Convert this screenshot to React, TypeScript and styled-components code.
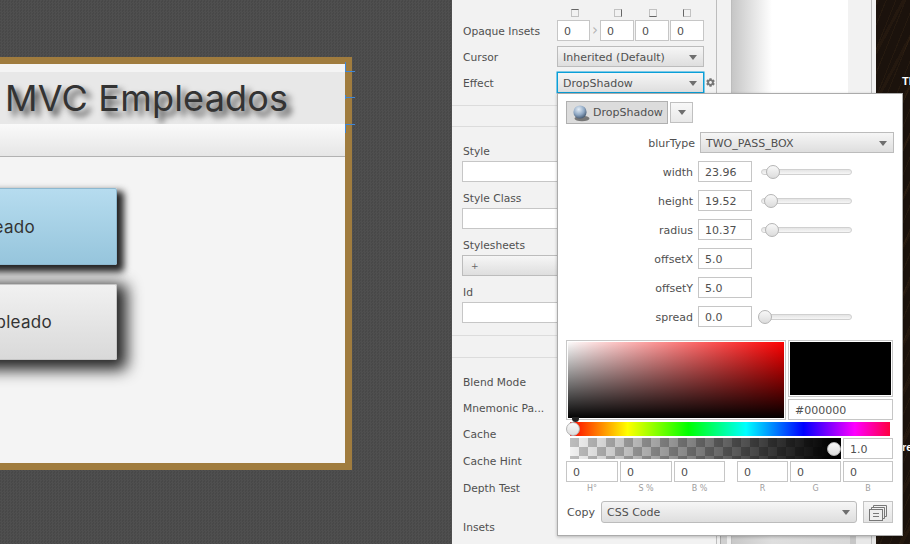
import React from 'react';
import styled, { createGlobalStyle } from 'styled-components';
import { FaCog } from 'react-icons/fa';

const GlobalStyle = createGlobalStyle`
  html, body {
    margin: 0;
    padding: 0;
    width: 910px;
    height: 544px;
    overflow: hidden;
    background: #4b4b4b;
  }
  * {
    box-sizing: border-box;
  }
`;

const uiFont = `"DejaVu Sans", "Liberation Sans", sans-serif`;

const Screen = styled.div`
  position: relative;
  display: flex;
  width: 910px;
  height: 544px;
  overflow: hidden;
  font-family: ${uiFont};
  font-size: 10.7px;
  color: #505050;
`;

/* left: scene builder canvas */
const Canvas = styled.div`
  width: 452px;
  height: 544px;
  flex: none;
  padding-top: 57px;
  background: repeating-conic-gradient(#4f4f4f 0 25%, #484848 0 50%) 0 0 / 3px 3px;
`;

const Frame = styled.div`
  position: relative;
  width: 502px;
  height: 413px;
  margin-left: -150px;
  border: 7px solid #a07c3e;
  background: #f4f4f4;
  padding-top: 8px;
  display: flex;
  flex-direction: column;
`;

const Guide = styled.span<{ $top: number; $up?: boolean; $down?: boolean }>`
  position: absolute;
  right: -10px;
  top: ${(p) => p.$top}px;
  width: 10px;
  height: 1px;
  background: #3d86d8;

  &::before {
    content: '';
    position: absolute;
    left: 0;
    width: 1px;
    height: ${(p) => (p.$up || p.$down ? 9 : 4)}px;
    top: ${(p) => (p.$up ? -9 : p.$down ? 0 : -2)}px;
    background: #3d86d8;
  }
`;

const TitleBar = styled.div`
  height: 52px;
  flex: none;
  background: #e8e8e8;
  padding-left: 148px;
  padding-bottom: 1px;
  display: flex;
  align-items: center;
  white-space: nowrap;
  font-family: Inter, "Liberation Sans", sans-serif;
  font-size: 36px;
  letter-spacing: 0.2px;
  color: #333;
  text-shadow: 5px 5px 6px rgba(0, 0, 0, 0.75);
`;

const ToolStrip = styled.div`
  height: 33px;
  flex: none;
  background: linear-gradient(#fafafa, #e6e6e6);
  border-bottom: 1px solid #b2b2b2;
`;

const FrameBody = styled.div`
  flex: 1;
  padding: 31px 0 0 60px;
  display: flex;
  flex-direction: column;
  gap: 19px;
`;

const BigButton = styled.div<{ $blue?: boolean; $tall?: boolean; $shadow: string; $inset: number }>`
  width: 200px;
  height: ${(p) => (p.$tall ? 77 : 76)}px;
  border-radius: 2px;
  border: 1px solid ${(p) => (p.$blue ? '#8db8cf' : '#c6c6c6')};
  background: ${(p) =>
    p.$blue ? 'linear-gradient(#b6dcef, #96c5dc)' : 'linear-gradient(#f1f1f1, #d9d9d9)'};
  box-shadow: ${(p) => p.$shadow};
  display: flex;
  align-items: center;
  justify-content: flex-end;
  padding-right: ${(p) => p.$inset}px;
  font-family: Inter, "Liberation Sans", sans-serif;
  font-size: 17px;
  letter-spacing: 0.3px;
  color: #333;
  white-space: nowrap;
`;

/* inspector */
const Inspector = styled.div`
  width: 264px;
  flex: none;
  height: 544px;
  background: #f2f2f2;
  padding-top: 7px;
  display: flex;
  flex-direction: column;
`;

const SideIcons = styled.div`
  height: 11px;
  margin: 0 0 2px 105px;
  padding: 2px 0 0 14px;
  display: flex;
`;

const SideIcon = styled.span<{ $side: string; $gap: number }>`
  width: 8px;
  height: 8px;
  margin-right: ${(p) => p.$gap}px;
  border: 1px solid #c2c2c2;
  border-${(p) => p.$side}-color: #666;
`;

const RowGroup = styled.div`
  display: flex;
  flex-direction: column;
  gap: 5px;
  padding: 0 12px 0 11px;
`;

const Row = styled.div`
  display: grid;
  grid-template-columns: 94px 147px;
  align-items: center;
  height: 21px;
  position: relative;
`;

const RowLabel = styled.span`
  margin-top: 2px;
`;

const InsetCells = styled.div`
  display: flex;
  align-items: center;
`;

const Chevron = styled.span`
  width: 10px;
  text-align: center;
  color: #b4b4b4;
  font-size: 15px;
  line-height: 19px;
`;

const Field = styled.div<{ $w?: number; $mr?: number }>`
  width: ${(p) => (p.$w ? `${p.$w}px` : '100%')};
  height: 21px;
  flex: none;
  margin-right: ${(p) => p.$mr ?? 0}px;
  background: #fff;
  border: 1px solid #c6c6c6;
  padding: 0 6px;
  line-height: 21px;
  font-size: 11px;
  color: #505050;
  white-space: nowrap;
`;

const Select = styled.div<{ $focus?: boolean; $round?: boolean; $w?: number }>`
  width: ${(p) => (p.$w ? `${p.$w}px` : '100%')};
  height: ${(p) => (p.$round ? 22 : 21)}px;
  flex: none;
  display: flex;
  align-items: center;
  justify-content: space-between;
  padding: 1px 6px 0 5px;
  border: 1px solid ${(p) => (p.$focus ? '#0a9fd8' : '#bcbcbc')};
  box-shadow: ${(p) => (p.$focus ? '0 0 0 0.5px #0a9fd8' : 'none')};
  border-radius: ${(p) => (p.$round ? 3 : 0)}px;
  background: linear-gradient(#f6f6f6, #dedede);
  font-size: 11px;
  color: #505050;
`;

const Plus = styled.span`
  padding-left: 3px;
  font-size: 9px;
  color: #666;
`;

const Caret = styled.span`
  width: 0;
  height: 0;
  border-left: 4px solid transparent;
  border-right: 4px solid transparent;
  border-top: 5px solid #6e6e6e;
`;

const GearSlot = styled.span`
  position: absolute;
  left: 243px;
  top: 6px;
  color: #777;
  display: flex;
`;

const Divider = styled.div<{ $top: number }>`
  height: 1px;
  flex: none;
  margin-top: ${(p) => p.$top}px;
  background: #dcdcdc;
`;

const Stack = styled.div<{ $top: number }>`
  margin-top: ${(p) => p.$top}px;
  padding-left: 10px;
  display: flex;
  flex-direction: column;
  gap: 3px;
`;

const StackLabel = styled.div`
  height: 14px;
  line-height: 14px;
  padding: 1px 0 0 1px;
`;

const PlainLabel = styled.div<{ $top: number }>`
  margin-top: ${(p) => p.$top}px;
  padding: 1px 0 0 11px;
  height: 14px;
  line-height: 14px;
`;

/* middle and right of the window */
const Strip = styled.div`
  width: 16px;
  flex: none;
  height: 544px;
  background: #f2f2f2;
  border-left: 1px solid #bdbdbd;
  border-right: 1px solid #bdbdbd;
  padding-top: 536px;
`;

const StripFooter = styled.div`
  height: 8px;
  background: linear-gradient(
    to right,
    #f0f0f0 0 3px,
    #a8a8a8 3px 4px,
    #cfcfcf 4px 10px,
    #eeeeee 10px
  );
`;

const Center = styled.div`
  width: 116px;
  flex: none;
  height: 544px;
  padding-top: 536px;
  background: linear-gradient(to right, #c6c6c6, #fff 40px);
`;

const CenterFooter = styled.div`
  height: 8px;
  background: linear-gradient(to right, #c8c8c8, #dedede 40px, #d8d8d8);
`;

const SidePane = styled.div`
  width: 28px;
  flex: none;
  height: 544px;
  padding-top: 536px;
  background: #f2f2f2;
  position: relative;
`;

const SidePaneFooter = styled.div`
  height: 8px;
  background: linear-gradient(to right, #d8d8d8 0 2px, #c6c6c6 2px 8px, #e8e8e8 8px);
`;

const SidePaneLine = styled.div`
  position: absolute;
  left: 23px;
  top: 0;
  width: 1px;
  height: 544px;
  background: #bdbdbd;
`;

const Wood = styled.div`
  flex: 1;
  height: 544px;
  padding: 75px 0 0 26px;
  overflow: hidden;
  background:
    repeating-linear-gradient(112deg, rgba(125, 88, 40, 0.1) 0 1px, transparent 1px 9px),
    repeating-linear-gradient(118deg, rgba(90, 60, 30, 0.14) 0 3px, transparent 3px 23px),
    #1b120c;
  color: #fff;
  font-family: "Liberation Sans", sans-serif;
  font-size: 11px;
  font-weight: 700;
  line-height: 13px;
  white-space: nowrap;
`;

const WoodLine = styled.div<{ $top?: number }>`
  margin-top: ${(p) => p.$top ?? 0}px;
`;

/* effect popup */
const Popup = styled.div`
  position: absolute;
  left: 557px;
  top: 93px;
  width: 346px;
  height: 443px;
  background: #fff;
  border: 1px solid #ababab;
  box-shadow: 0 1px 3px rgba(0, 0, 0, 0.25);
  padding: 7px 8px 0;
  display: flex;
  flex-direction: column;
`;

const PopupHeader = styled.div`
  display: flex;
  align-items: center;
  gap: 2px;
  height: 23px;
`;

const Toggle = styled.div`
  width: 102px;
  height: 23px;
  display: flex;
  align-items: center;
  gap: 3px;
  padding-left: 5px;
  background: #dcdcdc;
  border: 1px solid #b0b0b0;
  font-size: 11px;
  color: #505050;
`;

const MenuButton = styled.div`
  width: 23px;
  height: 21px;
  display: flex;
  align-items: center;
  justify-content: center;
  border: 1px solid #c0c0c0;
  background: linear-gradient(#f8f8f8, #e8e8e8);
`;

const PropRow = styled.div<{ $top: number }>`
  margin-top: ${(p) => p.$top}px;
  height: 21px;
  display: flex;
  align-items: center;
`;

const PropLabel = styled.div<{ $w: number }>`
  width: ${(p) => p.$w}px;
  flex: none;
  text-align: right;
  padding: 2px 5px 0 0;
  font-size: 11px;
`;

const Slider = styled.div`
  position: relative;
  width: 91px;
  height: 6px;
  margin-left: 9px;
  border-radius: 3px;
  border: 1px solid #d0d0d0;
  background: linear-gradient(#e4e4e4, #f6f6f6);
`;

const Thumb = styled.span<{ $at: number; $size?: number }>`
  position: absolute;
  left: ${(p) => p.$at}px;
  top: 50%;
  width: ${(p) => p.$size ?? 14}px;
  height: ${(p) => p.$size ?? 14}px;
  transform: translate(-50%, -50%);
  border-radius: 50%;
  border: 1px solid #b4b4b4;
  background: linear-gradient(#f8f8f8, #dcdcdc);
`;

const PickerTop = styled.div`
  margin-top: 13px;
  display: grid;
  grid-template-columns: 220px 105px;
  column-gap: 2px;
  height: 80px;
`;

const SatBox = styled.div`
  position: relative;
  border: 1px solid #c8c8c8;
  outline: 1px solid #fff;
  outline-offset: -2px;
  background:
    linear-gradient(to top, #000, transparent),
    linear-gradient(to right, #fff, #ff0000);
`;

const SatMarker = styled.span`
  position: absolute;
  left: 5px;
  bottom: -3px;
  width: 7px;
  height: 5px;
  border-radius: 0 0 4px 4px;
  background: #222;
`;

const PreviewColumn = styled.div`
  display: flex;
  flex-direction: column;
  gap: 2px;
`;

const Preview = styled.div`
  height: 57px;
  border: 1px solid #c8c8c8;
  outline: 1px solid #fff;
  outline-offset: -2px;
  background: #000;
`;

const HueBar = styled.div`
  position: relative;
  margin: 2px 4px 0 4px;
  width: 320px;
  height: 14px;
  background: linear-gradient(
    to right,
    #ff0000,
    #ffff00 18%,
    #00ff00 37%,
    #00ffff 55%,
    #0000ff 73%,
    #ff00ff 89%,
    #ff0040
  );
`;

const AlphaRow = styled.div`
  display: flex;
  margin-top: 2px;
  height: 21px;
  padding-left: 4px;
  gap: 2px;
`;

const AlphaBar = styled.div`
  position: relative;
  width: 271px;
  height: 21px;
  background:
    linear-gradient(to right, transparent, #000 97%),
    repeating-conic-gradient(#bdbdbd 0 25%, #f2f2f2 0 50%) 9px 0 / 18px 18px;
`;

const ValueGrid = styled.div`
  margin-top: 2px;
  display: grid;
  grid-template-columns: 52px 52px 51px 61px 51px 50px;
  column-gap: 2px;
`;

const ValueCell = styled.div<{ $gap?: boolean }>`
  display: flex;
  flex-direction: column;
  align-items: center;
  padding-left: ${(p) => (p.$gap ? 10 : 0)}px;
`;

const ValueCaption = styled.div`
  margin-top: 1px;
  font-size: 8px;
  line-height: 11px;
  color: #a0a0a0;
`;

const CopyRow = styled.div`
  margin-top: 7px;
  height: 22px;
  display: flex;
  align-items: center;
`;

const CopyLabel = styled.div`
  width: 35px;
  padding: 1px 0 0 1px;
  font-size: 11px;
`;

const CopyButton = styled.div`
  margin-left: 6px;
  width: 30px;
  height: 22px;
  display: flex;
  align-items: center;
  justify-content: center;
  border: 1px solid #c4c4c4;
  background: linear-gradient(#f6f6f6, #e4e4e4);
`;

const Sphere = () => (
  <svg width="18" height="18" viewBox="0 0 18 18">
    <defs>
      <radialGradient id="ball" cx="40%" cy="30%" r="70%">
        <stop offset="0%" stopColor="#e4edf6" />
        <stop offset="60%" stopColor="#8fa8c4" />
        <stop offset="100%" stopColor="#4a5e76" />
      </radialGradient>
    </defs>
    <ellipse cx="10" cy="14.5" rx="7.5" ry="2.8" fill="#777" />
    <circle cx="8" cy="8" r="6.6" fill="url(#ball)" />
  </svg>
);

const CopyIcon = () => (
  <svg width="19" height="17" viewBox="0 0 19 17" fill="none" stroke="#777" strokeWidth="1">
    <path d="M4.5 3.5V1.5H17.5V12.5H15.5" />
    <path d="M2.5 5.5V3.5H15.5V14.5H13.5" />
    <rect x="0.5" y="5.5" width="13" height="11" fill="#eee" />
    <path d="M4 9.5H10M4 12.5H10" />
  </svg>
);

const sliders = [
  { label: 'width', value: '23.96', at: 11 },
  { label: 'height', value: '19.52', at: 9 },
  { label: 'radius', value: '10.37', at: 10 },
];

const values = [
  { value: '0', caption: 'H°' },
  { value: '0', caption: 'S %' },
  { value: '0', caption: 'B %' },
  { value: '0', caption: 'R' },
  { value: '0', caption: 'G' },
  { value: '0', caption: 'B' },
];

export default function App() {
  return (
    <Screen>
      <GlobalStyle />
      <Canvas>
        <Frame>
          <Guide $top={7} $up />
          <Guide $top={33} />
          <Guide $top={60} $down />
          <TitleBar>MVC Empleados</TitleBar>
          <ToolStrip />
          <FrameBody>
            <BigButton $blue $tall $shadow="5px 5px 7px 2px rgba(0, 0, 0, 0.85)" $inset={81}>
              Nuevo Empleado
            </BigButton>
            <BigButton $shadow="5px 5px 15px 5px rgba(0, 0, 0, 0.85)" $inset={64}>
              Ver Empleado
            </BigButton>
          </FrameBody>
        </Frame>
      </Canvas>

      <Inspector>
        <SideIcons>
          <SideIcon $side="top" $gap={35} />
          <SideIcon $side="right" $gap={27} />
          <SideIcon $side="bottom" $gap={26} />
          <SideIcon $side="left" $gap={0} />
        </SideIcons>
        <RowGroup>
          <Row>
            <RowLabel>Opaque Insets</RowLabel>
            <InsetCells>
              <Field $w={33}>0</Field>
              <Chevron>›</Chevron>
              <Field $w={34} $mr={1}>0</Field>
              <Field $w={34} $mr={1}>0</Field>
              <Field $w={34}>0</Field>
            </InsetCells>
          </Row>
          <Row>
            <RowLabel>Cursor</RowLabel>
            <Select>
              Inherited (Default)
              <Caret />
            </Select>
          </Row>
          <Row>
            <RowLabel>Effect</RowLabel>
            <Select $focus>
              DropShadow
              <Caret />
            </Select>
            <GearSlot>
              <FaCog size={9} />
            </GearSlot>
          </Row>
        </RowGroup>
        <Divider $top={12} />
        <Divider $top={20} />
        <Stack $top={17}>
          <StackLabel>Style</StackLabel>
          <Field />
        </Stack>
        <Stack $top={9}>
          <StackLabel>Style Class</StackLabel>
          <Field />
        </Stack>
        <Stack $top={9}>
          <StackLabel>Stylesheets</StackLabel>
          <Select>
            <Plus>+</Plus>
          </Select>
        </Stack>
        <Stack $top={9}>
          <StackLabel>Id</StackLabel>
          <Field />
        </Stack>
        <Divider $top={12} />
        <Divider $top={21} />
        <PlainLabel $top={17}>Blend Mode</PlainLabel>
        <PlainLabel $top={12}>Mnemonic Pa...</PlainLabel>
        <PlainLabel $top={12}>Cache</PlainLabel>
        <PlainLabel $top={13}>Cache Hint</PlainLabel>
        <PlainLabel $top={13}>Depth Test</PlainLabel>
        <PlainLabel $top={25}>Insets</PlainLabel>
      </Inspector>

      <Strip>
        <StripFooter />
      </Strip>
      <Center>
        <CenterFooter />
      </Center>
      <SidePane>
        <SidePaneFooter />
        <SidePaneLine />
      </SidePane>
      <Wood>
        <WoodLine>TI</WoodLine>
        <WoodLine $top={353}>re</WoodLine>
      </Wood>

      <Popup>
        <PopupHeader>
          <Toggle>
            <Sphere />
            DropShadow
          </Toggle>
          <MenuButton>
            <Caret />
          </MenuButton>
        </PopupHeader>
        <PropRow $top={8}>
          <PropLabel $w={134}>blurType</PropLabel>
          <Select $w={194}>
            TWO_PASS_BOX
            <Caret />
          </Select>
        </PropRow>
        {sliders.map((s) => (
          <PropRow key={s.label} $top={8}>
            <PropLabel $w={132}>{s.label}</PropLabel>
            <Field $w={54}>{s.value}</Field>
            <Slider>
              <Thumb $at={s.at} />
            </Slider>
          </PropRow>
        ))}
        <PropRow $top={8}>
          <PropLabel $w={132}>offsetX</PropLabel>
          <Field $w={54}>5.0</Field>
        </PropRow>
        <PropRow $top={8}>
          <PropLabel $w={132}>offsetY</PropLabel>
          <Field $w={54}>5.0</Field>
        </PropRow>
        <PropRow $top={8}>
          <PropLabel $w={132}>spread</PropLabel>
          <Field $w={54}>0.0</Field>
          <Slider>
            <Thumb $at={3} />
          </Slider>
        </PropRow>

        <PickerTop>
          <SatBox>
            <SatMarker />
          </SatBox>
          <PreviewColumn>
            <Preview />
            <Field>#000000</Field>
          </PreviewColumn>
        </PickerTop>
        <HueBar>
          <Thumb $at={3} />
        </HueBar>
        <AlphaRow>
          <AlphaBar>
            <Thumb $at={264} />
          </AlphaBar>
          <Field $w={50}>1.0</Field>
        </AlphaRow>
        <ValueGrid>
          {values.map((v, i) => (
            <ValueCell key={v.caption + i} $gap={i === 3}>
              <Field>{v.value}</Field>
              <ValueCaption>{v.caption}</ValueCaption>
            </ValueCell>
          ))}
        </ValueGrid>
        <CopyRow>
          <CopyLabel>Copy</CopyLabel>
          <Select $round $w={256}>
            CSS Code
            <Caret />
          </Select>
          <CopyButton>
            <CopyIcon />
          </CopyButton>
        </CopyRow>
      </Popup>
    </Screen>
  );
}
